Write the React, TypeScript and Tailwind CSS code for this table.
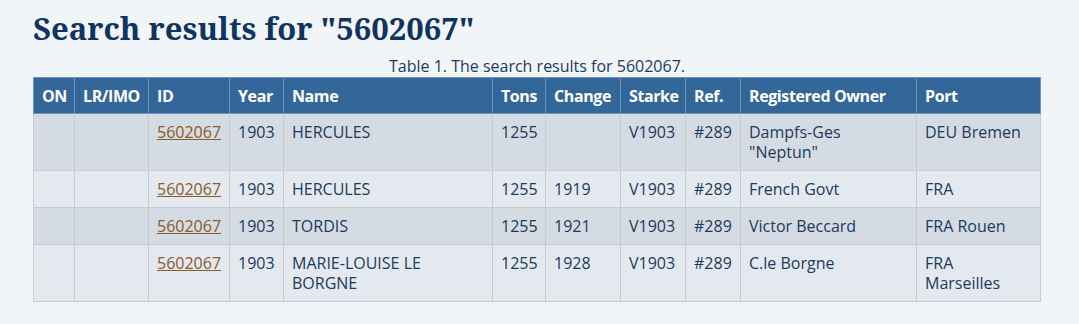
import React from "react";

const rows = [
  { id: "5602067", year: "1903", name: "HERCULES", tons: "1255", change: "", starke: "V1903", ref: "#289", owner: 'Dampfs-Ges "Neptun"', port: "DEU Bremen" },
  { id: "5602067", year: "1903", name: "HERCULES", tons: "1255", change: "1919", starke: "V1903", ref: "#289", owner: "French Govt", port: "FRA" },
  { id: "5602067", year: "1903", name: "TORDIS", tons: "1255", change: "1921", starke: "V1903", ref: "#289", owner: "Victor Beccard", port: "FRA Rouen" },
  { id: "5602067", year: "1903", name: "MARIE-LOUISE LE BORGNE", tons: "1255", change: "1928", starke: "V1903", ref: "#289", owner: "C.le Borgne", port: "FRA Marseilles" },
];

const cols = [
  { h: "ON", w: 41 },
  { h: "LR/IMO", w: 74 },
  { h: "ID", w: 81 },
  { h: "Year", w: 54 },
  { h: "Name", w: 209 },
  { h: "Tons", w: 53 },
  { h: "Change", w: 75 },
  { h: "Starke", w: 65 },
  { h: "Ref.", w: 55 },
  { h: "Registered Owner", w: 176 },
  { h: "Port", w: 124 },
];

export default function App() {
  return (
    <div className="min-h-[324px] w-full bg-[#f1f5f8] pl-[33px] pt-[8px] text-[#1b3a5e]" style={{ fontFamily: '"Open Sans", "Noto Sans", sans-serif' }}>
      <h1 className="text-[31px] font-bold leading-[40px] text-[#0f3460]" style={{ fontFamily: '"Noto Serif", "Droid Serif", "DejaVu Serif Condensed", serif' }}>
        Search results for "5602067"
      </h1>
      <table className="mt-[8px] w-[1007px] table-fixed border-collapse text-[16px] leading-[20px]">
        <caption className="pb-[1px] text-center text-[16px] leading-[20px] text-[#1b3a5e]">Table 1. The search results for 5602067.</caption>
        <colgroup>
          {cols.map((c) => (
            <col key={c.h} style={{ width: c.w }} />
          ))}
        </colgroup>
        <thead>
          <tr className="bg-[#336699] text-white">
            {cols.map((c) => (
              <th key={c.h} className="h-[36px] border border-[#6f93b8] px-[8px] text-left font-bold tracking-[-0.4px]">
                {c.h}
              </th>
            ))}
          </tr>
        </thead>
        <tbody>
          {rows.map((r, i) => (
            <tr key={i} className={i % 2 === 0 ? "bg-[#d5dbe2]" : "bg-[#e4e9ef]"}>
              <td className="border border-[#c6ccd3] px-[8px] py-[8px] align-top"></td>
              <td className="border border-[#c6ccd3] px-[8px] py-[8px] align-top"></td>
              <td className="border border-[#c6ccd3] px-[8px] py-[8px] align-top">
                <a href="#" className="text-[#8a5a2b] underline">{r.id}</a>
              </td>
              <td className="border border-[#c6ccd3] px-[8px] py-[8px] align-top">{r.year}</td>
              <td className="border border-[#c6ccd3] px-[8px] py-[8px] align-top">{r.name}</td>
              <td className="border border-[#c6ccd3] px-[8px] py-[8px] align-top">{r.tons}</td>
              <td className="border border-[#c6ccd3] px-[8px] py-[8px] align-top">{r.change}</td>
              <td className="border border-[#c6ccd3] px-[8px] py-[8px] align-top">{r.starke}</td>
              <td className="border border-[#c6ccd3] px-[8px] py-[8px] align-top">{r.ref}</td>
              <td className="border border-[#c6ccd3] px-[8px] py-[8px] align-top">{r.owner}</td>
              <td className="border border-[#c6ccd3] px-[8px] py-[8px] align-top">{r.port}</td>
            </tr>
          ))}
        </tbody>
      </table>
    </div>
  );
}
